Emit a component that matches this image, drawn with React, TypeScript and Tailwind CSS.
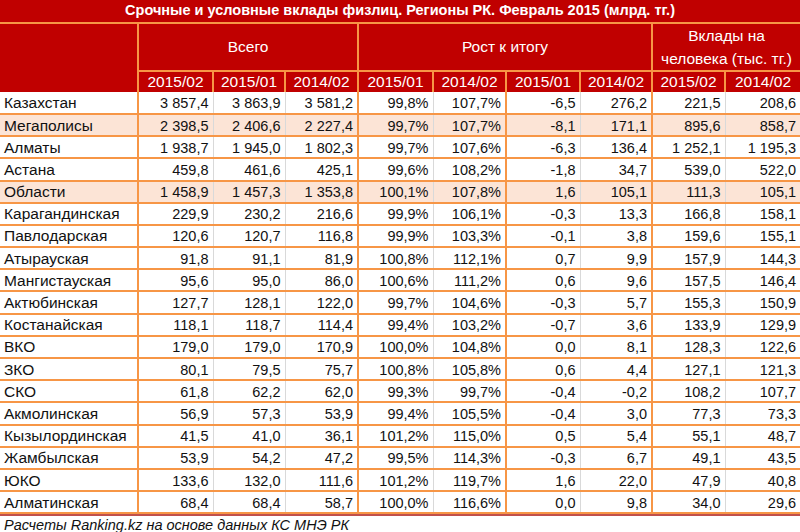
const rows: { name: string; v: string[]; hl?: boolean }[] = [
  { name: 'Казахстан', v: ['3 857,4', '3 863,9', '3 581,2', '99,8%', '107,7%', '-6,5', '276,2', '221,5', '208,6'] },
  { name: 'Мегаполисы', v: ['2 398,5', '2 406,6', '2 227,4', '99,7%', '107,7%', '-8,1', '171,1', '895,6', '858,7'], hl: true },
  { name: 'Алматы', v: ['1 938,7', '1 945,0', '1 802,3', '99,7%', '107,6%', '-6,3', '136,4', '1 252,1', '1 195,3'] },
  { name: 'Астана', v: ['459,8', '461,6', '425,1', '99,6%', '108,2%', '-1,8', '34,7', '539,0', '522,0'] },
  { name: 'Области', v: ['1 458,9', '1 457,3', '1 353,8', '100,1%', '107,8%', '1,6', '105,1', '111,3', '105,1'], hl: true },
  { name: 'Карагандинская', v: ['229,9', '230,2', '216,6', '99,9%', '106,1%', '-0,3', '13,3', '166,8', '158,1'] },
  { name: 'Павлодарская', v: ['120,6', '120,7', '116,8', '99,9%', '103,3%', '-0,1', '3,8', '159,6', '155,1'] },
  { name: 'Атырауская', v: ['91,8', '91,1', '81,9', '100,8%', '112,1%', '0,7', '9,9', '157,9', '144,3'] },
  { name: 'Мангистауская', v: ['95,6', '95,0', '86,0', '100,6%', '111,2%', '0,6', '9,6', '157,5', '146,4'] },
  { name: 'Актюбинская', v: ['127,7', '128,1', '122,0', '99,7%', '104,6%', '-0,3', '5,7', '155,3', '150,9'] },
  { name: 'Костанайская', v: ['118,1', '118,7', '114,4', '99,4%', '103,2%', '-0,7', '3,6', '133,9', '129,9'] },
  { name: 'ВКО', v: ['179,0', '179,0', '170,9', '100,0%', '104,8%', '0,0', '8,1', '128,3', '122,6'] },
  { name: 'ЗКО', v: ['80,1', '79,5', '75,7', '100,8%', '105,8%', '0,6', '4,4', '127,1', '121,3'] },
  { name: 'СКО', v: ['61,8', '62,2', '62,0', '99,3%', '99,7%', '-0,4', '-0,2', '108,2', '107,7'] },
  { name: 'Акмолинская', v: ['56,9', '57,3', '53,9', '99,4%', '105,5%', '-0,4', '3,0', '77,3', '73,3'] },
  { name: 'Кызылординская', v: ['41,5', '41,0', '36,1', '101,2%', '115,0%', '0,5', '5,4', '55,1', '48,7'] },
  { name: 'Жамбылская', v: ['53,9', '54,2', '47,2', '99,5%', '114,3%', '-0,3', '6,7', '49,1', '43,5'] },
  { name: 'ЮКО', v: ['133,6', '132,0', '111,6', '101,2%', '119,7%', '1,6', '22,0', '47,9', '40,8'] },
  { name: 'Алматинская', v: ['68,4', '68,4', '58,7', '100,0%', '116,6%', '0,0', '9,8', '34,0', '29,6'] },
];

const widths = [138, 75, 72, 73, 75, 73, 74, 72, 73, 75];
const years = ['2015/02', '2015/01', '2014/02', '2015/01', '2014/02', '2015/01', '2014/02', '2015/02', '2014/02'];
// columns after which an orange divider goes (index of value column)
const orangeRight = [2, 4, 6];

export default function App() {
  return (
    <div className="w-[800px] h-[532px] bg-white overflow-hidden" style={{ fontFamily: '"Liberation Sans", Arial, sans-serif' }}>
      <table className="table-fixed border-collapse w-[800px] text-[14.5px]">
        <colgroup>
          {widths.map((w, i) => (
            <col key={i} style={{ width: w }} />
          ))}
        </colgroup>
        <thead>
          <tr className="h-[22px] bg-[#c00000]">
            <th colSpan={10} className="p-0 text-center text-white font-bold text-[14.5px] border-b-2 border-[#f79646]">
              Срочные и условные вклады физлиц. Регионы РК. Февраль 2015 (млрд. тг.)
            </th>
          </tr>
          <tr className="h-[45px] bg-[#c00000] text-white text-[15.5px]">
            <th rowSpan={2} className="p-0 border-r-2 border-[#f79646]" />
            <th colSpan={3} className="p-0 font-normal text-center border-r-2 border-[#f79646]">Всего</th>
            <th colSpan={4} className="p-0 font-normal text-center border-r-2 border-[#f79646]">Рост к итогу</th>
            <th colSpan={2} className="p-0 font-normal text-center leading-[23px]">
              Вклады на
              <br />
              человека (тыс. тг.)
            </th>
          </tr>
          <tr className="h-[21px] bg-[#c00000] text-white text-[15.5px]">
            {years.map((y, i) => (
              <th
                key={i}
                className={`p-0 font-normal text-center leading-none border-t-2 border-[#f79646] ${i < 8 ? 'border-r-2' : ''}`}
              >
                {y}
              </th>
            ))}
          </tr>
        </thead>
        <tbody className="text-[#111]">
          {rows.map((r) => (
            <tr key={r.name} className={`h-[22.2px] ${r.hl ? 'bg-[#fce4d6]' : 'bg-white'}`}>
              <td className="p-0 pl-[4px] pt-[1px] text-[15.5px] border-b-2 border-r-2 border-[#f79646] whitespace-nowrap leading-[18px]">
                {r.name}
              </td>
              {r.v.map((x, i) => (
                <td
                  key={i}
                  className={`p-0 pr-[4px] pt-[1px] text-right leading-[18px] whitespace-nowrap border-b-2 border-b-[#f79646] ${
                    i === 8 ? '' : orangeRight.includes(i) ? 'border-r-2 border-r-[#f79646]' : 'border-r border-r-[#d9d9d9]'
                  }`}
                >
                  {x}
                </td>
              ))}
            </tr>
          ))}
        </tbody>
      </table>
      <div className="h-[20px] border-t-2 border-[#c0504d] border-b border-b-[#e6a3a3] pl-[4px] italic text-[14.5px] text-[#111] leading-[19px]">
        Расчеты Ranking.kz на основе данных КС МНЭ РК
      </div>
    </div>
  );
}
